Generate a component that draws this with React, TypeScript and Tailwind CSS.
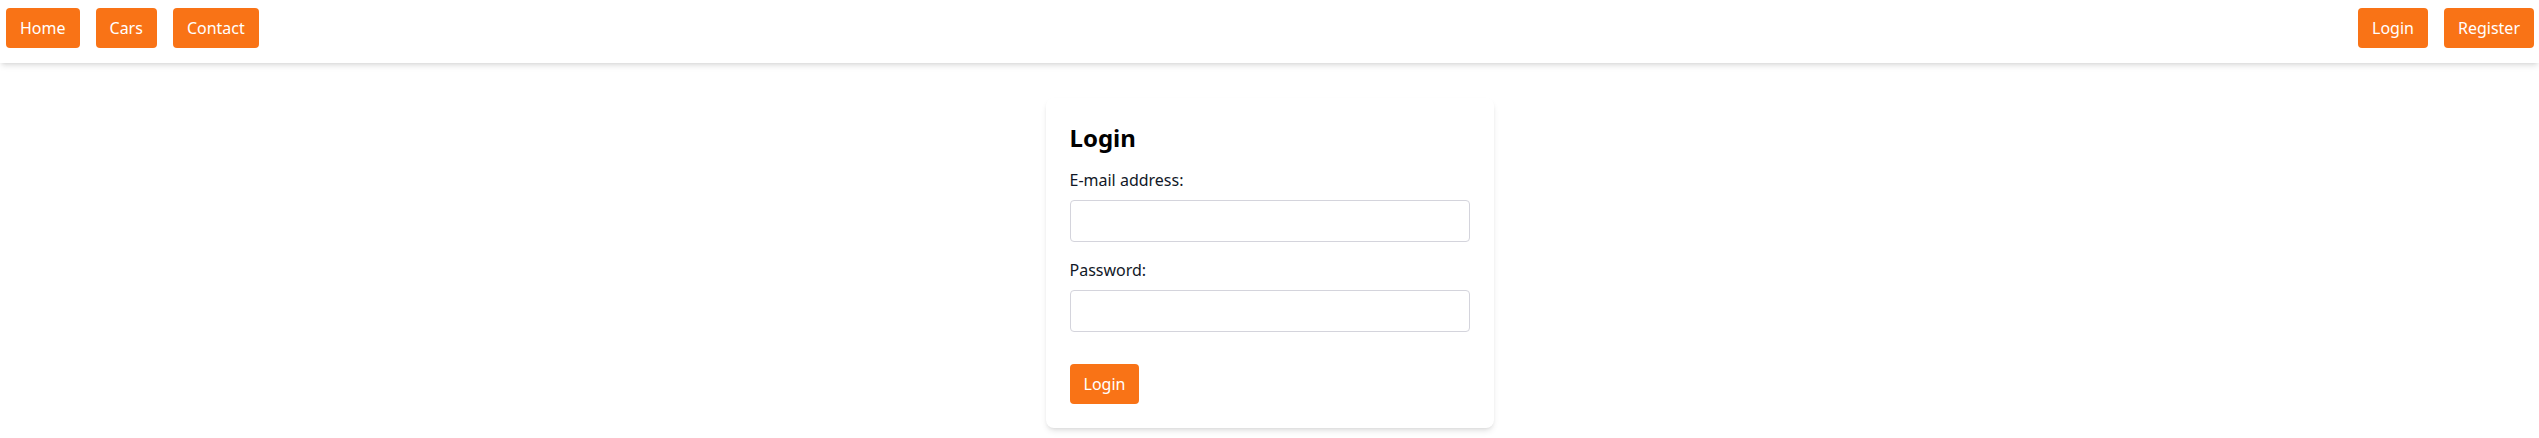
const font = { fontFamily: '"Noto Sans", "Open Sans", Arial, sans-serif' };

const NavButton = ({ label }: { label: string }) => (
  <button className="h-10 px-[14px] rounded bg-[#f97316] text-white text-base leading-6">{label}</button>
);

const App = () => {
  return (
    <div className="min-h-screen bg-white text-[#1f2937]" style={font}>
      <nav className="flex items-start justify-between bg-white pl-[6px] pr-[5px] pt-2 pb-[15px] shadow-md">
        <div className="flex gap-4">
          <NavButton label="Home" />
          <NavButton label="Cars" />
          <NavButton label="Contact" />
        </div>
        <div className="flex gap-4">
          <NavButton label="Login" />
          <NavButton label="Register" />
        </div>
      </nav>

      <main className="flex justify-center pt-[35px] pb-4">
        <div className="w-[448px] bg-white rounded-lg shadow-md p-6">
          <h2 className="text-2xl leading-8 font-bold text-black mb-[14px]">Login</h2>
          <div className="mb-4">
            <label className="block text-base leading-6 mb-2 text-[#111827]">E-mail address:</label>
            <input type="email" className="block w-full h-[42px] px-3 border border-[#d4d4dc] rounded outline-none" />
          </div>
          <div className="mb-4">
            <label className="block text-base leading-6 mb-2 text-[#111827]">Password:</label>
            <input type="password" className="block w-full h-[42px] px-3 border border-[#d4d4dc] rounded outline-none" />
          </div>
          <button className="mt-4 h-10 px-[14px] rounded bg-[#f97316] text-white text-base leading-6">Login</button>
        </div>
      </main>
    </div>
  );
};

export default App;
